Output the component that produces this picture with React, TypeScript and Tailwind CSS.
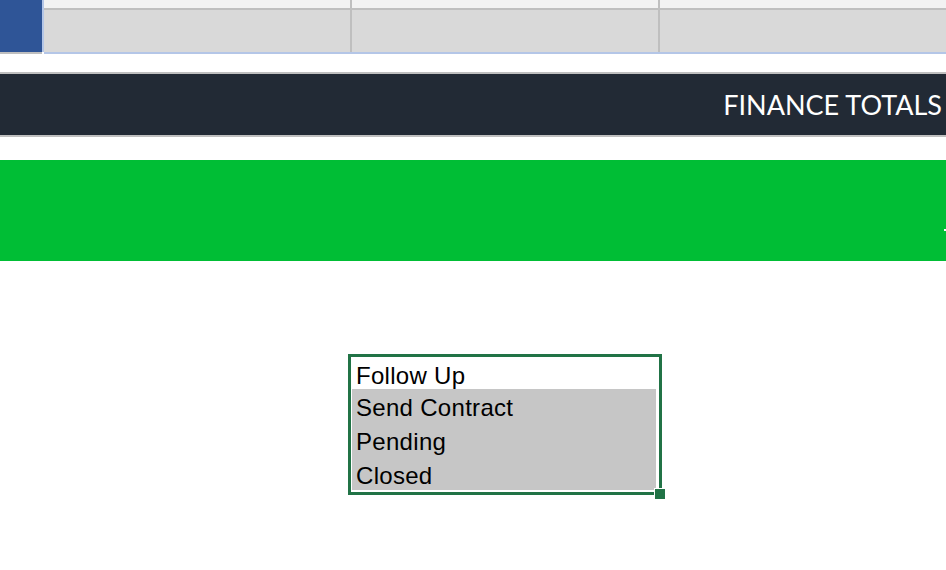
import React from 'react'

const options = ['Follow Up', 'Send Contract', 'Pending', 'Closed']

function HeaderCells() {
  return (
    <div className="flex h-[54px]">
      <div className="flex w-[42px] flex-col">
        <div className="h-[52px] bg-[#2f5597]" />
        <div className="h-[2px] bg-[#bfbfbf]" />
      </div>
      <div className="h-[52px] w-[2px] bg-[#b4c6e7]" />
      <div className="flex flex-1 flex-col">
        <div className="grid flex-1 grid-cols-[306px_2px_306px_2px_1fr]">
          {[0, 1, 2, 3, 4].map((i) =>
            i % 2 === 1 ? (
              <div key={i} className="bg-[#bfbfbf]" />
            ) : (
              <div key={i} className="flex flex-col">
                <div className="h-[8px] bg-[#f2f2f2]" />
                <div className="h-[2px] bg-[#bfbfbf]" />
                <div className="flex-1 bg-[#d9d9d9]" />
              </div>
            )
          )}
        </div>
        <div className="h-[2px] bg-[#b4c6e7]" />
      </div>
    </div>
  )
}

export default function App() {
  return (
    <div className="h-[570px] w-[946px] overflow-hidden bg-white">
      <HeaderCells />

      <div className="mt-[18px] h-[2px] bg-[#bfbfbf]" />
      <div className="flex h-[61px] items-center justify-end bg-[#222a35] pr-[4px]">
        <span
          className="text-[27px] leading-none text-white"
          style={{ fontFamily: 'Lato, "DejaVu Sans", sans-serif' }}
        >
          FINANCE TOTALS
        </span>
      </div>
      <div className="h-[2px] bg-[#bfbfbf]" />

      <div className="mt-[23px] flex h-[101px] justify-end bg-[#00be35]">
        <div className="mt-[69px] h-[2px] w-[2px] bg-white" />
      </div>

      <div className="ml-[348px] mt-[93px] w-[314px]">
        <div className="relative border-[3px] border-[#217346] bg-white pb-[2px] pl-[1px] pr-[3px]">
          {options.map((opt, i) => (
            <div
              key={opt}
              className={`flex items-center pl-[4px] pt-[5px] text-[24px] leading-none tracking-[0.3px] text-black ${
                i === 0 ? 'h-[32px] bg-white' : 'h-[33.7px] bg-[#c6c6c6]'
              }`}
              style={{ fontFamily: '"Liberation Sans", Arial, sans-serif' }}
            >
              {opt}
            </div>
          ))}
          <div className="absolute -bottom-[8px] -right-[7px] h-[12px] w-[12px] border border-white bg-[#217346]" />
        </div>
      </div>
    </div>
  )
}
